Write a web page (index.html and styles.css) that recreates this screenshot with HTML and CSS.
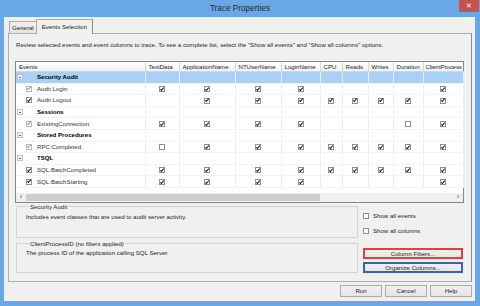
FILE: index.html
```html
<!DOCTYPE html>
<html lang="en">
<head>
    <meta charset="UTF-8">
    <title>Trace Properties</title>
    <link rel="stylesheet" href="styles.css">
</head>
<body>

<div class="window">
    <div class="titlebar">
        <span class="title">Trace Properties</span>
        <span class="close">&#x2715;</span>
    </div>

    <div class="client">
        <div class="tabs">
            <div class="tab">General</div>
            <div class="tab active">Events Selection</div>
        </div>

        <div class="panel">
            <p class="intro">Review selected events and event columns to trace. To see a complete list, select the "Show all events" and "Show all columns" options.</p>

            <div class="grid">
                <table>
                    <colgroup>
                        <col style="width:129px"><col style="width:34px"><col style="width:56px"><col style="width:46px"><col style="width:39px">
                        <col style="width:22px"><col style="width:26px"><col style="width:25px"><col style="width:30px"><col style="width:40px">
                    </colgroup>
                    <thead>
                        <tr>
                            <th>Events</th><th>TextData</th><th>ApplicationName</th><th>NTUserName</th><th>LoginName</th>
                            <th>CPU</th><th>Reads</th><th>Writes</th><th>Duration</th><th class="last">ClientProcess</th>
                        </tr>
                    </thead>
                    <tbody>
                        <tr class="cat sel">
                            <td><div class="ev"><i class="exp"></i><b>Security Audit</b></div></td>
                            <td></td><td></td><td></td><td></td><td></td><td></td><td></td><td></td><td></td>
                        </tr>
                        <tr>
                            <td><div class="ev"><i class="gap"></i><i class="ck on dim"></i><span>Audit Login</span></div></td>
                            <td><i class="ck on"></i></td><td><i class="ck on"></i></td><td><i class="ck on"></i></td><td><i class="ck on"></i></td>
                            <td></td><td></td><td></td><td></td><td><i class="ck on"></i></td>
                        </tr>
                        <tr>
                            <td><div class="ev"><i class="gap"></i><i class="ck on"></i><span>Audit Logout</span></div></td>
                            <td></td><td><i class="ck on"></i></td><td><i class="ck on"></i></td><td><i class="ck on"></i></td>
                            <td><i class="ck on"></i></td><td><i class="ck on"></i></td><td><i class="ck on"></i></td><td><i class="ck on"></i></td><td><i class="ck on"></i></td>
                        </tr>
                        <tr class="cat">
                            <td><div class="ev"><i class="exp"></i><b>Sessions</b></div></td>
                            <td></td><td></td><td></td><td></td><td></td><td></td><td></td><td></td><td></td>
                        </tr>
                        <tr>
                            <td><div class="ev"><i class="gap"></i><i class="ck on dim"></i><span>ExistingConnection</span></div></td>
                            <td><i class="ck on"></i></td><td><i class="ck on"></i></td><td><i class="ck on"></i></td><td><i class="ck on"></i></td>
                            <td></td><td></td><td></td><td><i class="ck"></i></td><td><i class="ck on"></i></td>
                        </tr>
                        <tr class="cat">
                            <td><div class="ev"><i class="exp"></i><b>Stored Procedures</b></div></td>
                            <td></td><td></td><td></td><td></td><td></td><td></td><td></td><td></td><td></td>
                        </tr>
                        <tr>
                            <td><div class="ev"><i class="gap"></i><i class="ck on dim"></i><span>RPC:Completed</span></div></td>
                            <td><i class="ck"></i></td><td><i class="ck on"></i></td><td><i class="ck on"></i></td><td><i class="ck on"></i></td>
                            <td><i class="ck on"></i></td><td><i class="ck on"></i></td><td><i class="ck on"></i></td><td><i class="ck on"></i></td><td><i class="ck on"></i></td>
                        </tr>
                        <tr class="cat">
                            <td><div class="ev"><i class="exp"></i><b>TSQL</b></div></td>
                            <td></td><td></td><td></td><td></td><td></td><td></td><td></td><td></td><td></td>
                        </tr>
                        <tr>
                            <td><div class="ev"><i class="gap"></i><i class="ck on"></i><span>SQL:BatchCompleted</span></div></td>
                            <td><i class="ck on"></i></td><td><i class="ck on"></i></td><td><i class="ck on"></i></td><td><i class="ck on"></i></td>
                            <td><i class="ck on"></i></td><td><i class="ck on"></i></td><td><i class="ck on"></i></td><td><i class="ck on"></i></td><td><i class="ck on"></i></td>
                        </tr>
                        <tr>
                            <td><div class="ev"><i class="gap"></i><i class="ck on"></i><span>SQL:BatchStarting</span></div></td>
                            <td><i class="ck on"></i></td><td><i class="ck on"></i></td><td><i class="ck on"></i></td><td><i class="ck on"></i></td>
                            <td></td><td></td><td></td><td></td><td><i class="ck on"></i></td>
                        </tr>
                    </tbody>
                </table>

                <div class="hscroll">
                    <span class="arrow">&lsaquo;</span>
                    <span class="thumb"></span>
                    <span class="track"></span>
                    <span class="arrow">&rsaquo;</span>
                </div>
            </div>

            <div class="lower">
                <div class="groups">
                    <fieldset class="group first">
                        <legend>Security Audit</legend>
                        <p>Includes event classes that are used to audit server activity.</p>
                    </fieldset>
                    <fieldset class="group second">
                        <legend>ClientProcessID (no filters applied)</legend>
                        <p>The process ID of the application calling SQL Server.</p>
                    </fieldset>
                </div>
                <div class="side">
                    <label class="opt first"><i class="ck"></i>Show all events</label>
                    <label class="opt"><i class="ck"></i>Show all columns</label>
                    <button class="btn mark-red">Column Filters...</button>
                    <button class="btn mark-blue">Organize Columns...</button>
                </div>
            </div>
        </div>

        <div class="footer">
            <button class="btn">Run</button>
            <button class="btn">Cancel</button>
            <button class="btn">Help</button>
        </div>
    </div>
</div>

</body>
</html>
```

FILE: styles.css
```css
body {
    margin: 0;
    width: 480px;
    height: 306px;
    overflow: hidden;
    font-family: 'Liberation Sans', Arial, sans-serif;
    font-size: 6.1px;
    line-height: 8px;
    color: #1e1e1e;
}
.window {
    width: 480px;
    height: 306px;
    background-color: #6aa7e6;
    display: flex;
    flex-direction: column;
}
.titlebar {
    height: 17px;
    display: grid;
    grid-template-columns: 1fr auto 1fr;
    align-items: start;
}
.title {
    grid-column: 2;
    font-size: 8.2px;
    line-height: 17px;
    color: #2a2a2a;
}
.close {
    grid-column: 3;
    justify-self: end;
    width: 20px;
    height: 12px;
    margin-right: 1px;
    background-color: #c75050;
    color: #fff;
    font-size: 7px;
    line-height: 12px;
    text-align: center;
}
.client {
    flex: 1;
    margin: 0 5px 5px 4px;
    background-color: #f0f0f0;
    display: flex;
    flex-direction: column;
}

/* tabs */
.tabs {
    height: 16px;
    display: flex;
    align-items: flex-end;
    padding-left: 5px;
}
.tab {
    height: 12px;
    box-sizing: border-box;
    padding: 0 2px;
    border: 1px solid #acacac;
    border-bottom: none;
    background: linear-gradient(#f0f0f0, #e5e5e5);
    line-height: 11px;
}
.tab.active {
    height: 15px;
    margin-left: -1px;
    margin-bottom: -1px;
    padding: 0 5px;
    background: #f0f0f0;
    border-right-color: #8a8a8a;
    line-height: 13px;
    position: relative;
    z-index: 1;
}
.panel {
    height: 249px;
    box-sizing: border-box;
    margin: 0 3px 0 4px;
    border: 1px solid #adadad;
    border-right-color: #8a8a8a;
    padding: 7px 7px 0 6px;
}
.intro {
    margin: 0 0 12px 1px;
    white-space: nowrap;
}

/* event grid */
.grid {
    height: 142px;
    box-sizing: border-box;
    border: 1px solid #828790;
    background-color: #fff;
    display: flex;
    flex-direction: column;
}
table {
    width: 447px;
    table-layout: fixed;
    border-collapse: collapse;
}
th {
    height: 9px;
    padding: 0 0 0 3px;
    font-weight: normal;
    text-align: left;
    line-height: 9px;
    white-space: nowrap;
    overflow: hidden;
    background: linear-gradient(#ffffff, #f2f2f2);
    border-right: 1px solid #d5d5d5;
    border-bottom: 1px solid #d5d5d5;
}
th.last {
    padding-left: 2px;
    letter-spacing: -0.1px;
    border-right: none;
}
td {
    height: 10.6px;
    padding: 0;
    text-align: center;
    vertical-align: middle;
    line-height: 8px;
    border-right: 1px solid #ededed;
    border-bottom: 1px solid #f3f3f3;
}
tr.sel td {
    background-color: #a9d1f5;
}
.ev {
    display: flex;
    align-items: center;
    white-space: nowrap;
    color: #333;
}
.ev b {
    margin-left: 14px;
    color: #000;
}
.ev span {
    margin-left: 5px;
}
.exp {
    width: 6px;
    height: 6px;
    margin-left: 1px;
    box-sizing: border-box;
    border: 1px solid #c2c2c2;
    background-color: #f4f4f4;
}
.exp::after {
    content: "";
    display: block;
    height: 1px;
    margin: 1.5px 1px 0;
    background-color: #666;
}
.gap {
    width: 7px;
}
.ev .ck {
    margin-left: 3px;
}

/* checkbox glyph */
.ck {
    display: inline-block;
    width: 6px;
    height: 6px;
    box-sizing: border-box;
    border: 1px solid #8e8f8f;
    background-color: #fff;
    vertical-align: middle;
    position: relative;
}
.ck.on::after {
    content: "";
    position: absolute;
    left: 1px;
    top: -0.5px;
    width: 1.3px;
    height: 3px;
    border: solid #111;
    border-width: 0 1.2px 1.2px 0;
    transform: rotate(40deg);
}
.ck.dim {
    border-color: #b9b9b9;
}
.ck.dim::after {
    border-color: #9a9a9a;
}

.hscroll {
    margin-top: auto;
    height: 9px;
    display: flex;
    background-color: #f0f0f0;
}
.arrow {
    width: 10px;
    font-size: 8px;
    line-height: 8px;
    text-align: center;
    color: #606060;
}
.thumb {
    width: 294px;
    margin: 1px 0;
    background-color: #cdcdcd;
}
.track {
    flex: 1;
}

/* lower area */
.lower {
    display: flex;
    gap: 5px;
    margin-left: 1px;
}
.groups {
    width: 342px;
}
.group {
    margin: 0;
    padding: 0 0 0 9px;
    box-sizing: border-box;
    border: 1px solid #d3d3d3;
    min-width: 0;
}
.group legend {
    margin-left: 3px;
    padding: 0 1px;
    line-height: 7px;
}
.group p {
    margin: 3px 0 0;
}
.group.first {
    height: 35px;
}
.group.second {
    height: 33px;
    margin-top: 2px;
}
.group.second p {
    margin-top: 2px;
}
.side {
    width: 100px;
    display: flex;
    flex-direction: column;
}
.opt {
    height: 8px;
    display: flex;
    align-items: center;
    gap: 4px;
    margin-top: 7px;
}
.opt.first {
    margin-top: 9px;
}
.btn {
    height: 11px;
    padding: 0;
    box-sizing: border-box;
    border: 1px solid #acacac;
    background: linear-gradient(#f0f0f0, #e5e5e5);
    font-family: inherit;
    font-size: 6.1px;
    line-height: 8px;
    color: #1e1e1e;
}
.side .btn {
    width: 100px;
}
.mark-red {
    margin-top: 13px;
    border: 2px solid #e4403b;
}
.mark-blue {
    margin-top: 3px;
    border: 2px solid #3a63ad;
}
.footer {
    flex: 1;
    display: flex;
    justify-content: flex-end;
    align-items: flex-start;
    gap: 3px;
    padding: 3px 3px 0 0;
}
.footer .btn {
    width: 42px;
    height: 12px;
}
```
